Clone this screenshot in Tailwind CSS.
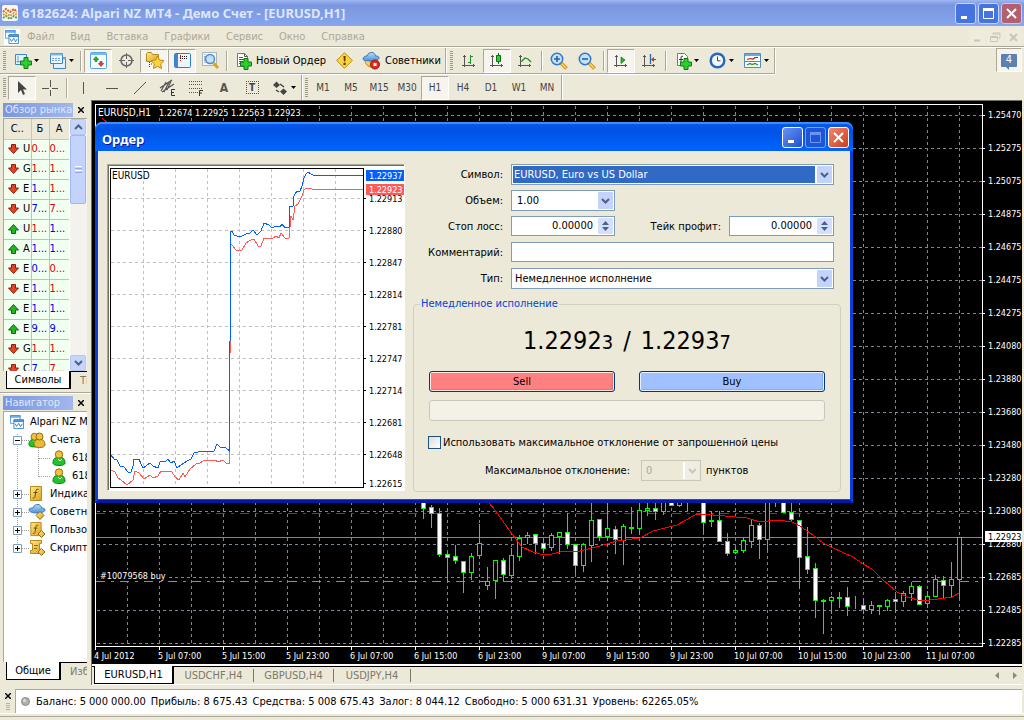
<!DOCTYPE html>
<html lang="ru">
<head>
<meta charset="utf-8">
<title>6182624: Alpari NZ MT4 - Демо Счет - [EURUSD,H1]</title>
<script src="https://cdn.jsdelivr.net/npm/@tailwindcss/browser@4"></script>
</head>
<body class="flex h-screen flex-col overflow-hidden bg-[#ece9d8] font-['DejaVu_Sans_Condensed','Noto_Sans',sans-serif] text-[11px] leading-[14px] text-black select-none">

<!-- shared icons -->
<svg width="0" height="0" class="absolute" aria-hidden="true">
  <defs>
    <linearGradient id="gBlue" x1="0" y1="0" x2="0" y2="1"><stop offset="0" stop-color="#b9dcfb"/><stop offset="1" stop-color="#4a90dc"/></linearGradient>
    <linearGradient id="gGold" x1="0" y1="0" x2="1" y2="1"><stop offset="0" stop-color="#ffe98a"/><stop offset="1" stop-color="#dca21c"/></linearGradient>
    <symbol id="plus" viewBox="0 0 12 12"><path d="M4 .5h4V4h3.500v4H8v3.500H4V8H.5V4H4z" fill="#2fce2f" stroke="#0b7d12"/></symbol>
    <symbol id="down" viewBox="0 0 11 10"><path d="M3.500.5h4V4h3L5.500 9.500.5 4h3z" fill="#e0452a" stroke="#8e1d0c"/></symbol>
    <symbol id="up" viewBox="0 0 11 10"><path d="M3.500 9.500h4V6h3L5.500.5.5 6h3z" fill="#25b325" stroke="#0d6b12"/></symbol>
    <symbol id="person" viewBox="0 0 14 16"><path d="M1 13c0-4 2-5.500 4-5.500h4c2 0 4 1.500 4 5.500 0 1.500-2 2.500-6 2.500S1 14.500 1 13z" fill="#1fc62a" stroke="#0e7a17"/><circle cx="7" cy="4.500" r="3.700" fill="#f0c244" stroke="#946b10"/><path d="M6 9l2 2 2-2" fill="none" stroke="#fff"/></symbol>
    <symbol id="axes" viewBox="0 0 16 16"><path d="M3.500 2v12M1 12.500h13M2 3.500h3M12.500 11v3" stroke="#555" fill="none"/></symbol>
    <symbol id="caret" viewBox="0 0 5 3"><path d="M0 0h5L2.500 3z" fill="#000"/></symbol>
    <symbol id="chev" viewBox="0 0 9 6"><path d="M1 1l3.500 3.500L8 1" fill="none" stroke="#4d6185" stroke-width="2"/></symbol>
    <symbol id="app" viewBox="0 0 16 16"><path d="M.5.5h11v9H.5z" fill="#fff" stroke="#4a94d8"/><path d="M.5.5h11v2H.5z" fill="#7ab8ee" stroke="#4a94d8"/><path d="M4.500 5.500h11v10h-11z" fill="#fff" stroke="#2f7fc9"/><path d="M4.500 5.500h11v2h-11z" fill="#58a5e6" stroke="#2f7fc9"/><path d="M6 10l1.500 3L10 9.500l2 4L14 10" fill="none" stroke="#2f6fc0"/></symbol>
    <symbol id="script" viewBox="0 0 16 16"><path d="M2.500.5h11v14h-11z" fill="url(#gGold)" stroke="#b88a1c"/><path d="M10.500 3.500c-2-1-2.500.5-2.700 2L7 10.500c-.3 1.500-1 2-2.500 1.500M5.500 6.500h4" fill="none" stroke="#6b4a00"/></symbol>
    <symbol id="hat" viewBox="0 0 18 16"><path d="M3 8c0 4 3 7 6 7 3.500 0 6-3 6-7z" fill="url(#gGold)" stroke="#b88a1c"/><path d="M1 7c0-2 2-3 4-3C6 1 8 .5 10 .5S13 2 13.500 4C16 4 17 4.500 17 6c0 2-4 3-8 3S1 8.500 1 7z" fill="url(#gBlue)" stroke="#3a76b8"/></symbol>
  </defs>
</svg>

<!-- title bar -->
<header class="flex h-[26px] shrink-0 items-center bg-linear-to-b from-[#9db6f3] from-0% via-[#7a96df] via-20% to-[#86a6ee] pr-[2px] pl-[2px]">
  <svg class="size-4 shrink-0" viewBox="0 0 16 16"><rect width="16" height="16" rx="2" fill="#fbf6ee"/><path d="M1 7l3-3 4 3 4-3 3 3" fill="none" stroke="#d9572b" stroke-width="2" stroke-dasharray="2 1"/><path d="M1 10l3-2 4 3 4-3 3 2" fill="none" stroke="#c8a43a" stroke-width="2" stroke-dasharray="2 1"/><path d="M1 13l3-2 4 3 4-3 3 2" fill="none" stroke="#58a04a" stroke-width="2" stroke-dasharray="2 1"/></svg>
  <h1 class="ml-1 flex-1 truncate font-['Noto_Sans',sans-serif] text-[13px] leading-[18px] font-bold text-[#dce6fc]">6182624: Alpari NZ MT4 - Демо Счет - [EURUSD,H1]</h1>
  <div class="flex gap-[2px]">
    <button aria-label="Свернуть" class="flex size-[21px] items-center justify-center rounded-[3px] border border-[#c6d4f7] bg-[#4573e0]"><svg class="size-[13px]" viewBox="0 0 13 13"><path d="M2 9h6v3H2z" fill="#fff"/></svg></button>
    <button aria-label="Развернуть" class="flex size-[21px] items-center justify-center rounded-[3px] border border-[#c6d4f7] bg-[#4573e0]"><svg class="size-[13px]" viewBox="0 0 13 13"><path d="M1.500 2.500h10v9h-10z" fill="none" stroke="#fff"/><path d="M1 1h11v3H1z" fill="#fff"/></svg></button>
    <button aria-label="Закрыть" class="flex size-[21px] items-center justify-center rounded-[3px] border border-[#d6c4dc] bg-[#b0606e]"><svg class="size-[13px]" viewBox="0 0 13 13"><path d="M2 2l9 9M11 2l-9 9" stroke="#fff" stroke-width="2"/></svg></button>
  </div>
</header>

<!-- menu -->
<nav class="flex h-[22px] shrink-0 items-center border-b border-white pr-[3px] pl-1 text-[#aca899] shadow-[inset_0_-1px_0_#aca899]">
  <span class="mr-[7px] flex size-4 items-center justify-center bg-white"><svg class="size-[14px]"><use href="#app"/></svg></span>
  <div class="flex flex-1 gap-4">
    <a href="#">Файл</a><a href="#">Вид</a><a href="#">Вставка</a><a href="#">Графики</a><a href="#">Сервис</a><a href="#">Окно</a><a href="#">Справка</a>
  </div>
  <div class="flex gap-[2px] text-[#c9c6b6]">
    <button aria-label="Свернуть окно" class="size-4 bg-[#efecde]"><svg class="size-4" viewBox="0 0 16 16"><path d="M5 11.500h6" stroke="currentColor" stroke-width="2"/></svg></button>
    <button aria-label="Восстановить окно" class="size-4 bg-[#efecde]"><svg class="size-4" viewBox="0 0 16 16"><path d="M6 6V4h7v5h-2M6 5h7M3.500 7.500h7v5h-7zM4 8.500h7" fill="none" stroke="currentColor"/></svg></button>
    <button aria-label="Закрыть окно" class="size-4 bg-[#efecde]"><svg class="size-4" viewBox="0 0 16 16"><path d="M5 5l7 7M12 5l-7 7" stroke="currentColor" stroke-width="2"/></svg></button>
  </div>
</nav>

<!-- main toolbar -->
<div class="flex h-[26px] shrink-0 items-start">
  <div role="toolbar" class="flex h-[26px] items-center border-r border-b border-[#aca899] shadow-[1px_1px_0_#fff]">
    <span class="w-2 pl-[3px]"><svg class="h-5 w-[3px]" viewBox="0 0 3 20"><path d="M1.500 0v20" stroke="#9d9a8b" stroke-width="3" stroke-dasharray="1 1"/></svg></span>
    <button aria-label="Новый график" class="flex h-6 w-9 items-center justify-center gap-[2px]"><svg class="size-[18px]" viewBox="0 0 18 18"><path d="M1.500 2.500h11v10h-11z" fill="#e4f1fc" stroke="#3d87c8"/><path d="M4 4v7M2.500 9.500h8" stroke="#6ba7dc"/><use href="#plus" x="6" y="5" width="12" height="12"/></svg><svg class="h-[3px] w-[5px]"><use href="#caret"/></svg></button>
    <button aria-label="Профили" class="flex h-6 w-[34px] items-center justify-center gap-[2px]"><svg class="size-[18px]" viewBox="0 0 18 18"><path d="M4.500 5.500h12v11h-12z" fill="#e4f1fc" stroke="#3d87c8"/><path d="M4.500 5.500h12v2h-12z" fill="#7ab8ee"/><path d="M1.500 1.500h12v10h-12z" fill="#eef6fd" stroke="#3d87c8"/><path d="M1.500 1.500h12v2h-12z" fill="#7ab8ee"/><path d="M3 6.500h9M3 8.500h9" stroke="#6ba7dc" stroke-dasharray="2 1"/></svg><svg class="h-[3px] w-[5px]"><use href="#caret"/></svg></button>
    <span class="mx-[2px] h-5 w-[2px] border-r border-white bg-[#aca899]"></span>
    <button aria-label="Обзор рынка" class="flex h-6 w-7 items-center justify-center border border-[#aca899] border-r-white border-b-white bg-[#f6f4ec]"><svg class="size-[17px]" viewBox="0 0 17 17"><rect x=".5" y=".5" width="16" height="16" rx="1" fill="#f4fafe" stroke="#58a5e6"/><path d="M1 1h15v2H1z" fill="#7ab8ee"/><use href="#up" x="3" y="4" width="6" height="6"/><use href="#down" x="8" y="9" width="6" height="6"/></svg></button>
    <button aria-label="Окно данных" class="flex h-6 w-7 items-center justify-center"><svg class="size-[17px]" viewBox="0 0 17 17"><circle cx="8.500" cy="8.500" r="5.500" fill="none" stroke="#666" stroke-width="1.500"/><path d="M8.500 1v6M8.500 10v6M1 8.500h6M10 8.500h6" stroke="#666"/></svg></button>
    <button aria-label="Навигатор" class="flex h-6 w-7 items-center justify-center border border-[#aca899] border-r-white border-b-white bg-[#f6f4ec]"><svg class="size-[19px]" viewBox="0 0 19 19"><path d="M1.500 2.500l1-1h4l1 2h6v7h-12z" fill="url(#gGold)" stroke="#b88a1c"/><path d="M4.500 11v6M6 13h2" stroke="#444" stroke-dasharray="1 1"/><path d="M12.500 5l2 4 4.500.7-3.300 3.200.8 4.600-4-2.100-4 2.100.8-4.600L6 9.700l4.500-.7z" fill="#fcd23a" stroke="#b88a1c"/></svg></button>
    <button aria-label="Терминал" class="flex h-6 w-7 items-center justify-center border border-[#aca899] border-r-white border-b-white bg-[#f6f4ec]"><svg class="size-[17px]" viewBox="0 0 17 17"><rect x=".5" y="1.500" width="16" height="14" rx="1" fill="#eaf4fd" stroke="#2f7fc9"/><path d="M1 2h3v13H1z" fill="#3f86cc"/><path d="M6.500 3v3M6.500 8v1" stroke="#e01010"/><path d="M6.500 6v1M8 4.500h6M8 6.500h6" stroke="#111" stroke-dasharray="1 1"/></svg></button>
    <button aria-label="Тестер стратегий" class="flex h-6 w-7 items-center justify-center"><svg class="size-[19px]" viewBox="0 0 19 19"><path d="M1.500 1.500h14v13h-14z" fill="#f4f6f8" stroke="#a9b4bf"/><path d="M3 6h10M3 9h3M4 3v10" stroke="#7f92a6" stroke-dasharray="1 1"/><circle cx="9" cy="8" r="4.500" fill="#bcdcf6" fill-opacity=".8" stroke="#4a8fd0" stroke-width="1.500"/><path d="M12.500 12l4.500 5" stroke="#d9a429" stroke-width="3"/></svg></button>
    <span class="mx-[2px] h-5 w-[2px] border-r border-white bg-[#aca899]"></span>
    <button class="flex h-6 w-[100px] items-center gap-1 pl-1 whitespace-nowrap"><svg class="size-[18px] shrink-0" viewBox="0 0 18 18"><path d="M3.500 1.500h7l3 3v10h-10z" fill="#fff" stroke="#777"/><path d="M10.500 1.500v3h3M5 5.500h4M5 7.500h6M5 9.500h4M5 11.500h3" fill="none" stroke="#555"/><use href="#plus" x="6" y="6" width="12" height="12"/></svg>Новый Ордер</button>
    <button aria-label="MetaEditor" class="flex h-6 w-7 items-center justify-center"><svg class="size-[17px]" viewBox="0 0 17 17"><path d="M8.500.7l7.800 7.800-7.800 7.800L.7 8.500z" fill="#fbd440" stroke="#b98b15"/><path d="M7.500 4h2.200l-.4 5.500H7.900zM7.500 10.700h2.200V13H7.500z" fill="#5a3b00"/></svg></button>
    <button class="flex h-6 w-[87px] items-center gap-[5px] pl-1 whitespace-nowrap"><svg class="size-[18px] shrink-0" viewBox="0 0 18 18"><use href="#hat" width="18" height="16"/><circle cx="13" cy="12.500" r="4.500" fill="#e02a1c" stroke="#a01208"/><path d="M11.500 11h3v3h-3z" fill="#fff"/></svg>Советники</button>
  </div>
  <div role="toolbar" class="flex h-[26px] items-center border-r border-b border-[#aca899] pl-px shadow-[1px_1px_0_#fff]">
    <span class="w-2 pl-[3px]"><svg class="h-5 w-[3px]" viewBox="0 0 3 20"><path d="M1.500 0v20" stroke="#9d9a8b" stroke-width="3" stroke-dasharray="1 1"/></svg></span>
    <button aria-label="Бары" class="flex h-6 w-7 items-center justify-center"><svg class="size-4" viewBox="0 0 16 16"><use href="#axes"/><path d="M9.500 2v9M9.500 3.500H12M7 9.500h2.500" stroke="#1d8f23" fill="none"/></svg></button>
    <button aria-label="Японские свечи" class="flex h-6 w-7 items-center justify-center border border-[#aca899] border-r-white border-b-white bg-[#f6f4ec]"><svg class="size-4" viewBox="0 0 16 16"><use href="#axes"/><path d="M9.500 0v11" stroke="#0d7016"/><path d="M7.500 2.500h4v6h-4z" fill="#2fce2f" stroke="#0d7016"/></svg></button>
    <button aria-label="Линия" class="flex h-6 w-7 items-center justify-center"><svg class="size-4" viewBox="0 0 16 16"><use href="#axes"/><path d="M3 9l2-1 3-3 3 1 3 3" stroke="#1d8f23" fill="none" stroke-width="1.300"/></svg></button>
    <span class="mx-[2px] h-5 w-[2px] border-r border-white bg-[#aca899]"></span>
    <button aria-label="Увеличить" class="flex h-6 w-7 items-center justify-center"><svg class="size-[18px]" viewBox="0 0 18 18"><path d="M11 11l5.500 5.500" stroke="#c9921d" stroke-width="3.500"/><path d="M11 11l5 5" stroke="#ffdc5e" stroke-width="1.500"/><circle cx="7" cy="7" r="5.700" fill="#c5e2fb" stroke="#2f78c8" stroke-width="1.500"/><path d="M4 7h6M7 4v6" stroke="#2a5fa8" stroke-width="1.600"/></svg></button>
    <button aria-label="Уменьшить" class="flex h-6 w-7 items-center justify-center"><svg class="size-[18px]" viewBox="0 0 18 18"><path d="M11 11l5.500 5.500" stroke="#c9921d" stroke-width="3.500"/><path d="M11 11l5 5" stroke="#ffdc5e" stroke-width="1.500"/><circle cx="7" cy="7" r="5.700" fill="#c5e2fb" stroke="#2f78c8" stroke-width="1.500"/><path d="M4 7h6" stroke="#2a5fa8" stroke-width="1.600"/></svg></button>
    <span class="mx-[2px] h-5 w-[2px] border-r border-white bg-[#aca899]"></span>
    <button aria-label="Автопрокрутка" class="flex h-6 w-7 items-center justify-center border border-[#aca899] border-r-white border-b-white bg-[#f6f4ec]"><svg class="size-4" viewBox="0 0 16 16"><use href="#axes"/><path d="M8 4l4 3-4 3.500z" fill="#23b52a" stroke="#0d7016" stroke-width=".7"/></svg></button>
    <button aria-label="Сдвиг графика" class="flex h-6 w-7 items-center justify-center"><svg class="size-4" viewBox="0 0 16 16"><use href="#axes"/><path d="M9.500 1v10" stroke="#2668b8" stroke-width="1.300"/><path d="M10 6.500l3-2.500v2h2v1h-2v2z" fill="#c0331c"/></svg></button>
    <span class="mx-[2px] h-5 w-[2px] border-r border-white bg-[#aca899]"></span>
    <button aria-label="Индикаторы" class="flex h-6 w-[35px] items-center justify-center gap-[2px]"><svg class="size-[18px]" viewBox="0 0 18 18"><path d="M3.500 1.500h7l3 3v9h-10z" fill="#fff" stroke="#777"/><path d="M9 4.500c-1.500-1-2 0-2 1.500v6M5 7.500h4" fill="none" stroke="#333"/><use href="#plus" x="6" y="6" width="12" height="12"/></svg><svg class="h-[3px] w-[5px]"><use href="#caret"/></svg></button>
    <button aria-label="Периоды" class="flex h-6 w-[35px] items-center justify-center gap-[3px]"><svg class="size-[17px]" viewBox="0 0 17 17"><circle cx="8.500" cy="8.500" r="6.800" fill="#f4f7fa" stroke="#2468c0" stroke-width="2.500"/><path d="M8.500 4.500v4.300h3" fill="none" stroke="#444"/></svg><svg class="h-[3px] w-[5px]"><use href="#caret"/></svg></button>
    <button aria-label="Шаблоны" class="flex h-6 w-[35px] items-center justify-center gap-[3px]"><svg class="size-[17px]" viewBox="0 0 17 17"><path d="M.5 1.500h16v14H.5z" fill="#fff" stroke="#4f8cc4"/><path d="M1 2h15v2H1z" fill="#6aa8e2"/><path d="M1 9.500h15" stroke="#4f8cc4"/><path d="M3 7.500l3-1 3 .5 2-1.500h3" fill="none" stroke="#a82020" stroke-width="1.200"/><path d="M3 13l3-1.500 2 1 3-1 3 1.500" fill="none" stroke="#1d8f23" stroke-width="1.200"/></svg><svg class="h-[3px] w-[5px]"><use href="#caret"/></svg></button>
  </div>
  <div class="flex flex-1 justify-end pr-[2px]">
    <button aria-label="Сообщения: 4" class="flex h-6 w-[26px] items-center justify-center border border-[#aca899] border-r-white border-b-white bg-[#f6f4ec]"><span class="relative flex h-[13px] w-4 items-center justify-center rounded-[1px] bg-[#5b80b4] text-white">4<svg class="absolute top-[12px] left-1 h-1 w-2" viewBox="0 0 8 4"><path d="M0 0h4v4z" fill="#5b80b4"/></svg></span></button>
  </div>
</div>

<!-- drawing and timeframe toolbars -->
<div class="flex h-[26px] shrink-0 items-center pt-px text-[10px] text-[#444]">
  <div role="toolbar" class="flex h-[25px] items-center border-r border-[#aca899] shadow-[1px_0_0_#fff]">
    <span class="w-2 pl-[3px]"><svg class="h-5 w-[3px]" viewBox="0 0 3 20"><path d="M1.500 0v20" stroke="#9d9a8b" stroke-width="3" stroke-dasharray="1 1"/></svg></span>
    <button aria-label="Курсор" class="flex h-6 w-7 items-center justify-center border border-[#aca899] border-r-white border-b-white bg-[#f6f4ec]"><svg class="size-4" viewBox="0 0 16 16"><path d="M4 1v12l3-3 2 5 2-1-2-4.500h4z" fill="#444"/></svg></button>
    <button aria-label="Перекрестие" class="flex h-6 w-7 items-center justify-center"><svg class="size-4" viewBox="0 0 16 16"><path d="M8.500 0v7M8.500 10v6M0 8.500h7M10 8.500h6" stroke="#555"/></svg></button>
    <span class="mx-[2px] h-5 w-[2px] border-r border-white bg-[#aca899]"></span>
    <button aria-label="Вертикальная линия" class="flex h-6 w-7 items-center justify-center"><svg class="size-4" viewBox="0 0 16 16"><path d="M7.500 2v12" stroke="#555"/></svg></button>
    <button aria-label="Горизонтальная линия" class="flex h-6 w-7 items-center justify-center"><svg class="size-4" viewBox="0 0 16 16"><path d="M2 8.500h12" stroke="#555"/></svg></button>
    <button aria-label="Трендовая линия" class="flex h-6 w-7 items-center justify-center"><svg class="size-4" viewBox="0 0 16 16"><path d="M2 14L14 2" stroke="#555"/></svg></button>
    <button aria-label="Равноудаленный канал" class="flex h-6 w-7 items-center justify-center"><svg class="size-[18px]" viewBox="0 0 18 18"><path d="M1 9L13 1M3 13L15 5M2 12l5-9M5 13l5-10M8 11l4-9" stroke="#555" stroke-width="1.200"/><path d="M16 10.500h-3.500v6H16M12.500 13.500H15" fill="none" stroke="#333"/></svg></button>
    <button aria-label="Линии Фибоначчи" class="flex h-6 w-7 items-center justify-center"><svg class="size-[18px]" viewBox="0 0 18 18"><path d="M2 2.500h14M2 5.500h14M2 9.500h14M2 13.500h9" stroke="#555" stroke-dasharray="1 1"/><path d="M16 11.500h-3.500V17M12.500 14H15" fill="none" stroke="#333"/></svg></button>
    <button aria-label="Текст" class="flex h-6 w-7 items-center justify-center text-[12px] font-bold text-[#555]">A</button>
    <button aria-label="Текстовая метка" class="flex h-6 w-7 items-center justify-center"><span class="flex size-[13px] items-center justify-center border border-dotted border-[#555] font-bold">T</span></button>
    <button aria-label="Стрелки" class="flex h-6 w-[35px] items-center justify-center gap-[3px]"><svg class="size-4" viewBox="0 0 16 16"><path d="M1 5l3.500-3.500L8 5 4.500 8zM8 11.500l3.500-3 3.500 3-3.500 3.500z" fill="#444"/><path d="M4 10l3 2M8 4l4 3" stroke="#444" stroke-width="1.500"/></svg><svg class="h-[3px] w-[5px]"><use href="#caret"/></svg></button>
  </div>
  <div role="toolbar" class="flex h-[25px] items-center border-r border-[#aca899] shadow-[1px_0_0_#fff]">
    <span class="w-[7px] pl-[3px]"><svg class="h-5 w-[3px]" viewBox="0 0 3 20"><path d="M1.500 0v20" stroke="#9d9a8b" stroke-width="3" stroke-dasharray="1 1"/></svg></span>
    <button class="h-6 w-7">M1</button><button class="h-6 w-7">M5</button><button class="h-6 w-7">M15</button><button class="h-6 w-7">M30</button><button class="h-6 w-7 border border-[#aca899] border-r-white border-b-white bg-[#f6f4ec]">H1</button><button class="h-6 w-7">H4</button><button class="h-6 w-7">D1</button><button class="h-6 w-7">W1</button><button class="h-6 w-7">MN</button>
  </div>
</div>

<main class="flex min-h-0 flex-1">
  <!-- docked panels -->
  <aside class="flex w-[91px] shrink-0 flex-col overflow-hidden pt-[2px]">
    <section class="flex h-[292px] shrink-0 flex-col border-b border-white pr-1 pl-[3px] shadow-[inset_0_-1px_0_#aca899]">
      <div class="flex h-4 shrink-0 items-center">
        <h2 class="h-[14px] w-[70px] overflow-hidden bg-linear-to-r from-[#7a96df] to-[#a3b8ea] pl-[2px] leading-[13px] whitespace-nowrap text-[#dce6fc]">Обзор рынка</h2>
        <button aria-label="Закрыть обзор рынка" class="ml-[5px]"><svg class="size-[6px]" viewBox="0 0 6 6"><path d="M0 0l6 6M6 0L0 6" stroke="#000" stroke-width="1.500"/></svg></button>
      </div>
      <div class="flex h-[253px] shrink-0 overflow-hidden border-t border-l border-[#aca899] bg-white">
        <table class="w-[65px] shrink-0 table-fixed self-start border-collapse">
          <colgroup><col class="w-[27px]"><col class="w-[18px]"><col class="w-5"></colgroup>
          <thead><tr class="h-5 bg-[#ece9d8]"><th class="border-r border-b border-[#cbc7b8] p-0 font-normal">С..</th><th class="border-r border-b border-[#cbc7b8] p-0 font-normal">Б</th><th class="border-b border-[#cbc7b8] p-0 font-normal">А</th></tr></thead>
          <tbody id="quotes"></tbody>
        </table>
        <div class="ml-px flex flex-1 flex-col bg-[#f3f2ec] pr-px">
          <button aria-label="Вверх" class="flex h-4 items-center justify-center rounded-[2px] border border-[#b4c6f4] bg-[#c6d5fc]"><svg class="h-[6px] w-[9px] rotate-180"><use href="#chev"/></svg></button>
          <div class="flex h-[69px] flex-col items-center justify-center gap-px rounded-[2px] border border-[#a0b6ee] bg-[#c3d3fb]"><i class="h-px w-[7px] bg-white"></i><i class="h-px w-[7px] bg-[#8ea8e8]"></i><i class="h-px w-[7px] bg-white"></i><i class="h-px w-[7px] bg-[#8ea8e8]"></i></div>
          <button aria-label="Вниз" class="mt-auto flex h-4 items-center justify-center rounded-[2px] border border-[#b4c6f4] bg-[#c6d5fc]"><svg class="h-[6px] w-[9px]"><use href="#chev"/></svg></button>
        </div>
      </div>
      <div class="flex h-[18px] shrink-0 overflow-hidden pl-[3px]">
        <button class="w-[65px] shrink-0 border border-t-0 border-r-2 border-black bg-white">Символы</button>
        <button class="flex-1 overflow-hidden border-t border-black pl-[9px] text-left whitespace-nowrap text-[#7b7869]">Тиковый</button>
      </div>
    </section>
    <section class="flex min-h-0 flex-1 flex-col pr-1 pb-[5px] pl-[3px]">
      <div class="flex h-[17px] shrink-0 items-center pt-px">
        <h2 class="h-[14px] w-[70px] overflow-hidden bg-linear-to-r from-[#7a96df] to-[#a3b8ea] pl-[2px] leading-[13px] whitespace-nowrap text-[#dce6fc]">Навигатор</h2>
        <button aria-label="Закрыть навигатор" class="ml-[5px]"><svg class="size-[6px]" viewBox="0 0 6 6"><path d="M0 0l6 6M6 0L0 6" stroke="#000" stroke-width="1.500"/></svg></button>
      </div>
      <ul class="relative min-h-0 flex-1 overflow-hidden border-t border-l border-[#aca899] bg-white pt-px whitespace-nowrap">
        <svg class="absolute top-[22px] left-[13px] h-[120px] w-[60px]" viewBox="0 0 60 120"><path d="M.5 0v114M1 114.500h12M1 96.500h12M1 78.500h12M1 60.500h12M1 6.500h12M21.500 14v29M22 24.500h12M22 42.500h12" fill="none" stroke="#9d9d9d" stroke-dasharray="1 1"/></svg>
        <li class="flex h-[18px] items-center gap-[6px] pl-[6px]"><svg class="size-[14px] shrink-0"><use href="#app"/></svg>Alpari NZ MT4</li>
        <li class="relative flex h-[18px] items-center gap-[4px] pl-[9px]"><svg class="mr-[2px] size-[9px] shrink-0" viewBox="0 0 9 9"><path d="M.5.5h8v8h-8z" fill="#fff" stroke="#7b9ebd"/><path d="M2 4.500h5" stroke="#000"/></svg><svg class="h-[17px] w-[18px] shrink-0" viewBox="0 0 18 17"><use href="#person" x="0" y="0" width="13" height="16"/><path d="M6 13c0-4 2-5.500 4-5.500h3c2 0 4 1.500 4 5.500 0 1.500-2 2.500-5.500 2.500S6 14.500 6 13z" fill="#edb93a" stroke="#946b10"/><circle cx="11.500" cy="4.500" r="3.500" fill="#f0c244" stroke="#946b10"/></svg>Счета</li>
        <li class="relative flex h-[18px] items-center gap-[6px] pl-12"><svg class="h-4 w-[14px] shrink-0"><use href="#person"/></svg>6182624</li>
        <li class="relative flex h-[18px] items-center gap-[6px] pl-12"><svg class="h-4 w-[14px] shrink-0"><use href="#person"/></svg>6182625</li>
        <li class="relative flex h-[18px] items-center gap-[4px] pl-[9px]"><svg class="mr-[2px] size-[9px] shrink-0" viewBox="0 0 9 9"><path d="M.5.5h8v8h-8z" fill="#fff" stroke="#7b9ebd"/><path d="M2 4.500h5M4.500 2v5" stroke="#000"/></svg><svg class="h-4 w-[18px] shrink-0" viewBox="0 0 18 16"><use href="#script" width="16" height="16"/></svg>Индикаторы</li>
        <li class="relative flex h-[18px] items-center gap-[4px] pl-[9px]"><svg class="mr-[2px] size-[9px] shrink-0" viewBox="0 0 9 9"><path d="M.5.5h8v8h-8z" fill="#fff" stroke="#7b9ebd"/><path d="M2 4.500h5M4.500 2v5" stroke="#000"/></svg><svg class="h-4 w-[18px] shrink-0" viewBox="0 0 18 16"><path d="M1 6c0-2 2-2 4-2 1-3 3-3.500 5-3.500s3 1.500 3.500 3.500c2 0 3.500.5 3.500 2 0 2-4 3-8 3S1 8 1 6z" fill="url(#gBlue)" stroke="#3a76b8"/><path d="M12 7.500l4 4-4 4-4-4z" fill="url(#gGold)" stroke="#946b10"/></svg>Советники</li>
        <li class="relative flex h-[18px] items-center gap-[4px] pl-[9px]"><svg class="mr-[2px] size-[9px] shrink-0" viewBox="0 0 9 9"><path d="M.5.5h8v8h-8z" fill="#fff" stroke="#7b9ebd"/><path d="M2 4.500h5M4.500 2v5" stroke="#000"/></svg><svg class="h-4 w-[18px] shrink-0" viewBox="0 0 18 16"><use href="#script" width="16" height="15"/><path d="M13.500 8.500l3.500 3.500-3.500 3.500L10 12z" fill="url(#gGold)" stroke="#946b10"/></svg>Пользовательские</li>
        <li class="relative flex h-[18px] items-center gap-[4px] pl-[9px]"><svg class="mr-[2px] size-[9px] shrink-0" viewBox="0 0 9 9"><path d="M.5.5h8v8h-8z" fill="#fff" stroke="#7b9ebd"/><path d="M2 4.500h5M4.500 2v5" stroke="#000"/></svg><svg class="h-4 w-[18px] shrink-0" viewBox="0 0 18 16"><path d="M2.500.5h11v3h-2v7h2v3h-11v-3h2v-7h-2z" fill="url(#gGold)" stroke="#b88a1c"/><path d="M6 5.500h4M6 8.500h3" stroke="#946b10"/><path d="M13.500 8.500l3.500 3.500-3.500 3.500L10 12z" fill="url(#gGold)" stroke="#946b10"/></svg>Скрипты</li>
      </ul>
      <div class="flex h-[18px] shrink-0 overflow-hidden pl-[3px]">
        <button class="w-[55px] shrink-0 border border-t-0 border-r-2 border-black bg-white">Общие</button>
        <button class="flex-1 overflow-hidden border-t border-black pl-[9px] text-left whitespace-nowrap text-[#7b7869]">Избранное</button>
      </div>
    </section>
  </aside>

  <!-- chart window -->
  <section class="relative flex min-w-0 flex-1 flex-col border-l border-[#716f64] pr-[2px]">
    <div class="min-h-0 flex-1 border-t border-[#716f64] bg-black">
      <svg class="block size-full" viewBox="92 101 930 563" role="img" aria-label="График EURUSD,H1" shape-rendering="crispEdges">
        <g id="grid" stroke="#778899" stroke-dasharray="3 3"></g>
        <path d="M96 513.500h887" stroke="#ff0000" stroke-dasharray="9 6 3 6"/>
        <path d="M96 581.500h887" stroke="#32cd32" stroke-dasharray="9 6 3 6"/>
        <path d="M96 537.500h887" stroke="#778899"/>
        <path d="M95.500 646.500v-542h887v542z" fill="none" stroke="#fff"/>
        <path d="M96 112l3 4 8 6" stroke="#f00" fill="none"/>
        <g id="candles" stroke="#00ff00"></g>
        <polyline fill="none" stroke="#f00" points="489,503 495,510 512,534 522,547 533,552 544,555 552,554 560,552 580,551 600,546 617,541 640,538 653,531 677,525 695,515 700,514 725,516 747,518 760,522 777,520 792,522 800,526 813,535 823,543 833,548 853,557 863,564 872,569 882,579 897,592 907,597 922,601 938,599 952,597 959,593"/>
        <g id="axis" fill="#fff" font-size="9" font-family="'DejaVu Sans Condensed',sans-serif"></g>
        <g fill="#fff" font-size="9" font-family="'DejaVu Sans Condensed',sans-serif">
          <path d="M96 107h204v11H96zM98 570h70v11H98z" fill="#000"/>
          <text x="98" y="116" font-size="10">EURUSD,H1</text><text x="159" y="116">1.22674 1.22925 1.22563 1.22923</text>
          <text x="100" y="579">#10079568 buy</text>
          <path d="M985 531h37v11h-37z"/><text x="988" y="540" fill="#000">1.22923</text>
        </g>
      </svg>
    </div>

    <!-- chart tabs -->
    <div class="flex h-[21px] shrink-0 border-b border-white pt-[2px] text-[#7b7869] shadow-[inset_0_2px_0_#fff]">
      <span class="w-[2px] border-t border-black"></span>
      <button class="w-[80px] border border-t-0 border-r-2 border-black bg-white text-black">EURUSD,H1</button>
      <div class="flex flex-1 items-center border-t border-black">
        <button class="h-[13px] w-20 border-r border-[#7b7869] leading-[13px]">USDCHF,H4</button>
        <button class="h-[13px] w-20 border-r border-[#7b7869] leading-[13px]">GBPUSD,H4</button>
        <button class="h-[13px] w-[77px] border-r border-[#7b7869] leading-[13px]">USDJPY,H4</button>
        <span class="ml-auto flex gap-[14px] pr-[5px]"><button aria-label="Назад"><svg class="h-[7px] w-1" viewBox="0 0 4 7"><path d="M4 0v7L0 3.500z" fill="#8d8a7b"/></svg></button><button aria-label="Вперед"><svg class="h-[7px] w-1" viewBox="0 0 4 7"><path d="M0 0v7l4-3.500z" fill="#8d8a7b"/></svg></button></span>
      </div>
    </div>

    <!-- order dialog floating over the chart -->
    <div role="dialog" aria-labelledby="dlgTitle" class="absolute top-[22px] left-[3px] flex w-[758px] flex-col rounded-t-[7px] border-x-[3px] border-b-[3px] border-[#0a40d8] border-b-[#0019a8] bg-[#ece9d8] shadow-[inset_0_-1px_0_#0855dd]">
      <div class="-mx-[3px] flex h-[29px] items-center rounded-t-[7px] bg-linear-to-b from-[#0a5cf0] from-0% via-[#0053e4] via-30% to-[#0062fb] to-90% pr-1 pl-[7px] shadow-[inset_0_2px_0_#3c8cff]">
        <h2 id="dlgTitle" class="flex-1 pt-1 font-['Noto_Sans',sans-serif] text-[13px] leading-[18px] font-bold text-white [text-shadow:1px_1px_#0f1089]">Ордер</h2>
        <div class="flex gap-[2px] pt-[2px]">
          <button aria-label="Свернуть" class="flex size-[21px] items-center justify-center rounded-[3px] border border-white bg-linear-to-br from-[#6a92f0] to-[#1c4fd0]"><svg class="size-[13px]" viewBox="0 0 13 13"><path d="M2 9h6v3H2z" fill="#fff"/></svg></button>
          <button aria-label="Развернуть" disabled class="flex size-[21px] items-center justify-center rounded-[3px] border border-[#7fa4ee] bg-[#1a55dc]"><svg class="size-[13px]" viewBox="0 0 13 13"><path d="M1.500 2.500h10v9h-10z" fill="none" stroke="#6f95ea"/><path d="M1 1h11v3H1z" fill="#6f95ea"/></svg></button>
          <button aria-label="Закрыть" class="flex size-[21px] items-center justify-center rounded-[3px] border border-white bg-linear-to-br from-[#f0876a] to-[#cf3a12]"><svg class="size-[13px]" viewBox="0 0 13 13"><path d="M2 2l9 9M11 2l-9 9" stroke="#fff" stroke-width="2"/></svg></button>
        </div>
      </div>
      <div class="flex gap-2 pt-[13px] pr-[9px] pb-2 pl-[9px]">
        <div class="h-[327px] w-[298px] shrink-0 border border-[#aca899] border-r-white border-b-white bg-white shadow-[inset_1px_1px_0_#716f64]">
          <svg class="block size-full" viewBox="108 165 296 325" shape-rendering="crispEdges" role="img" aria-label="Тиковый график EURUSD">
            <g id="miniGrid" stroke="#c0c0c0" stroke-dasharray="3 3"></g>
            <path d="M110.500 168.500h253v319h-253z" fill="none" stroke="#000"/>
            <polyline fill="none" stroke="#ff5a5a" points="111,470 115,472 118,478 121,480 127,485 133,480 135,471 139,473 144,479 150,475 153,478 158,476 161,471 172,472 175,477 179,480 183,473 185,477 190,469 196,464 200,463 205,460 215,460 218,462 223,460 227,464 229.500,463 229.500,451"/>
            <polyline fill="none" stroke="#ff5a5a" points="230.500,244 233,246 236,250 242,250 246,243 251,240 254,239 258,246 261,246 264,238 272,239 276,236 279,238 281,233 285,238 289,238 291,216 293,220 295,206 298,204 302,196 304,190 306,188 311,188 313,190 315,189.500 363,189.500"/>
            <polyline fill="none" stroke="#0060ff" points="111,455 114,459 117,460 120,466 124,467 128,472 131,472 133,466 134,459 139,459 141,464 143,468 146,466 150,463 153,466 158,468 160,462 166,461 168,459 171,463 174,461 177,468 181,465 187,461 191,459 194,453 202,451 214,451 217,444 220,447 226,448 229.500,451 229.500,341 230.500,341 230.500,231 232,231 234,235 240,237 246,234 250,233 253,230 257,235 261,231 264,223 269,225 272,228 276,226 280,227 282,224 285,228 289,227 290,206 293,206 294,196 297,191 300,191 302,186 304,178 306,174 308,172 311,174 314,175.500 363,175.500"/>
            <path d="M230.500 341v12" stroke="#ff5a5a"/>
            <g id="miniAxis" font-size="9" font-family="'DejaVu Sans Condensed',sans-serif"></g>
            <g font-size="9" font-family="'DejaVu Sans Condensed',sans-serif" fill="#fff">
              <text x="112" y="179" fill="#000" font-size="10">EURUSD</text>
              <path d="M366 170h38v11h-38z" fill="#0060ff"/><text x="369" y="179">1.22937</text>
              <path d="M366 184h38v11h-38z" fill="#ff5a5a"/><text x="369" y="193">1.22923</text>
            </g>
          </svg>
        </div>

        <form class="min-w-0 flex-1" onsubmit="return false">
          <div class="grid auto-rows-[26px] grid-cols-[90px_104px_1fr_105px] items-start gap-x-2 pr-[7px]">
            <label for="sym" class="pt-1 text-right">Символ:</label>
            <div class="relative col-span-3 flex h-[21px] border border-[#7f9db9] bg-white p-px">
              <select id="sym" class="h-full flex-1 appearance-none bg-[#316ac5] pl-px text-white outline-none"><option>EURUSD, Euro vs US Dollar</option></select>
              <span class="pointer-events-none ml-[2px] flex w-[15px] items-center justify-center rounded-[1px] bg-[#c3d3fb]"><svg class="h-[6px] w-[9px]"><use href="#chev"/></svg></span>
            </div>

            <label for="vol" class="pt-1 text-right">Объем:</label>
            <div class="flex h-[21px] border border-[#7f9db9] bg-white p-px">
              <select id="vol" class="h-full flex-1 appearance-none pl-1 outline-none"><option>1.00</option></select>
              <span class="pointer-events-none flex w-[15px] items-center justify-center rounded-[1px] bg-[#c3d3fb]"><svg class="h-[6px] w-[9px]"><use href="#chev"/></svg></span>
            </div>
            <span class="col-span-2"></span>

            <label for="sl" class="pt-1 text-right">Стоп лосс:</label>
            <div class="flex h-5 border border-[#7f9db9] bg-white p-px">
              <input id="sl" value="0.00000" class="w-0 flex-1 pr-[5px] text-right outline-none">
              <span class="flex w-[15px] flex-col justify-evenly rounded-[1px] bg-[#d3dffc]"><button type="button" aria-label="Больше" class="flex justify-center"><svg class="h-1 w-[7px]" viewBox="0 0 7 4"><path d="M0 4h7L3.500 0z" fill="#4d6185"/></svg></button><button type="button" aria-label="Меньше" class="flex justify-center"><svg class="h-1 w-[7px]" viewBox="0 0 7 4"><path d="M0 0h7L3.500 4z" fill="#4d6185"/></svg></button></span>
            </div>
            <label for="tp" class="pt-1 text-right whitespace-nowrap">Тейк профит:</label>
            <div class="flex h-5 border border-[#7f9db9] bg-white p-px">
              <input id="tp" value="0.00000" class="w-0 flex-1 pr-[5px] text-right outline-none">
              <span class="flex w-[15px] flex-col justify-evenly rounded-[1px] bg-[#d3dffc]"><button type="button" aria-label="Больше" class="flex justify-center"><svg class="h-1 w-[7px]" viewBox="0 0 7 4"><path d="M0 4h7L3.500 0z" fill="#4d6185"/></svg></button><button type="button" aria-label="Меньше" class="flex justify-center"><svg class="h-1 w-[7px]" viewBox="0 0 7 4"><path d="M0 0h7L3.500 4z" fill="#4d6185"/></svg></button></span>
            </div>

            <label for="com" class="pt-1 text-right">Комментарий:</label>
            <input id="com" class="col-span-3 h-5 border border-[#7f9db9] bg-white px-1 outline-none">

            <label for="typ" class="pt-1 text-right">Тип:</label>
            <div class="col-span-3 flex h-[21px] border border-[#7f9db9] bg-white p-px">
              <select id="typ" class="h-full flex-1 appearance-none pl-[2px] outline-none"><option>Немедленное исполнение</option></select>
              <span class="pointer-events-none flex w-[15px] items-center justify-center rounded-[1px] bg-[#c3d3fb]"><svg class="h-[6px] w-[9px]"><use href="#chev"/></svg></span>
            </div>
          </div>

          <fieldset class="mt-[3px] rounded-[4px] border border-[#d0d0bf] px-[15px] pb-[10px]">
            <legend class="-ml-[9px] px-px text-[#0046d5]">Немедленное исполнение</legend>
            <p class="flex h-[60px] items-center justify-center pt-px text-[25px] leading-[30px]"><span>1.2292<span class="text-[20px]">3</span><span class="mx-[10px]">/</span>1.2293<span class="text-[20px]">7</span></span></p>
            <div class="flex gap-6">
              <button type="button" class="h-[21px] flex-1 rounded-[3px] border border-[#003c74] bg-[#ff8080] leading-[17px] shadow-[inset_0_0_0_1px_#ffe8e4,inset_-2px_-2px_0_#e87070]">Sell</button>
              <button type="button" class="h-[21px] flex-1 rounded-[3px] border border-[#003c74] bg-[#a0c0ff] leading-[17px] shadow-[inset_0_0_0_1px_#e8f0ff,inset_-2px_-2px_0_#8caaf0]">Buy</button>
            </div>
            <button type="button" disabled aria-label="Статус" class="mt-2 block h-[21px] w-full rounded-[3px] border border-[#c9c7ba] bg-[#f4f2e8]"></button>
            <div class="mt-[14px] -ml-px flex items-center gap-[2px] whitespace-nowrap">
              <input id="dev" type="checkbox" class="size-[13px] shrink-0 appearance-none border border-[#1c5180] bg-linear-to-br from-[#dcdcd7] to-white">
              <label for="dev" class="pt-px">Использовать максимальное отклонение от запрошенной цены</label>
            </div>
            <div class="mt-[10px] flex h-[21px] items-center pl-[56px] whitespace-nowrap">
              <label for="max" class="w-[145px] text-right">Максимальное отклонение:</label>
              <span class="mr-[5px] ml-[11px] flex h-[21px] w-[60px] border border-[#c9c7ba] p-px">
                <select id="max" disabled class="h-full flex-1 appearance-none bg-[#ece9d8] pl-[3px] text-[#aca899] opacity-100"><option>0</option></select>
                <span class="flex w-[16px] items-center justify-center border-l-2 border-white bg-[#f0eee2]"><svg class="h-[6px] w-[9px]" viewBox="0 0 9 6"><path d="M1 1l3.500 3.500L8 1" fill="none" stroke="#c9c7ba" stroke-width="2"/></svg></span>
              </span>
              <span>пунктов</span>
            </div>
          </fieldset>
        </form>
      </div>
    </div>
  </section>
</main>

<!-- account status -->
<footer class="flex h-[35px] shrink-0 flex-col pt-1">
  <div class="flex h-[25px] border-b border-white pr-[2px]">
    <div class="flex w-[15px] flex-col items-center gap-1 pt-1"><button aria-label="Закрыть терминал"><svg class="size-[6px]" viewBox="0 0 6 6"><path d="M0 0l6 6M6 0L0 6" stroke="#000" stroke-width="1.500"/></svg></button><svg class="h-[8px] w-1" viewBox="0 0 4 8"><path d="M0 .5h4M0 2.500h4M0 4.500h4M0 6.500h4" stroke="#b5b2a2"/></svg></div>
    <p class="flex flex-1 items-center gap-[5px] border-t border-l border-[#aca899] bg-white pl-[5px]"><svg class="mr-px size-[9px]" viewBox="0 0 9 9"><circle cx="4.500" cy="4.500" r="4" fill="#b0b0aa" stroke="#8b8b85"/><circle cx="3.500" cy="3.500" r="1.500" fill="#dededa"/></svg><span>Баланс: 5 000 000.00</span><span>Прибыль: 8 675.43</span><span>Средства: 5 008 675.43</span><span>Залог: 8 044.12</span><span>Свободно: 5 000 631.31</span><span>Уровень: 62265.05%</span></p>
  </div>
  <div class="mt-[2px] border-t border-[#aca899]"></div>
</footer>

<script>
const quotes = [['down','U','0','r','0','r'],['down','G','1','r','1','r'],['down','E','1','b','1','r'],['down','U','7','b','7','r'],['up','U','1','r','1','b'],['up','A','1','b','1','b'],['down','E','0','b','0','r'],['down','E','1','b','1','r'],['up','E','1','b','1','b'],['up','E','9','b','9','b'],['down','G','1','r','1','r'],['down','C','7','b','7','r']];
const ink = { r: 'text-[#e00000]', b: 'text-[#0000e0]' };
document.getElementById('quotes').innerHTML = quotes.map(([d, s, bid, bc, ask, ac]) =>
  `<tr class="h-5 bg-[#f0fff0]"><td class="border-r border-b border-[#c0c0c0] p-0"><span class="flex items-center gap-1 pl-1"><svg class="h-[10px] w-[11px] shrink-0"><use href="#${d}"/></svg>${s}</span></td><td class="border-r border-b border-[#c0c0c0] p-0 ${ink[bc]}">${bid}...</td><td class="border-b border-[#c0c0c0] p-0 ${ink[ac]}">${ask}...</td></tr>`).join('');

const line = (x1, y1, x2, y2) => `<path d="M${x1} ${y1}L${x2} ${y2}"/>`;
const range = (a, b, step) => Array.from({ length: Math.floor((b - a) / step) + 1 }, (_, i) => a + i * step);

// main chart grid and scales
document.getElementById('grid').innerHTML =
  range(127, 981, 32).map(x => line(x + .5, 106, x + .5, 646)).join('') +
  range(115, 643, 33).map(y => line(97, y + .5, 982, y + .5)).join('');
const prices = ['1.25470','1.25275','1.25075','1.24875','1.24675','1.24475','1.24275','1.24080','1.23880','1.23680','1.23480','1.23280','1.23080','1.22880','1.22685','1.22485','1.22285'];
const times = ['4 Jul 2012','5 Jul 07:00','5 Jul 15:00','5 Jul 23:00','6 Jul 07:00','6 Jul 15:00','6 Jul 23:00','9 Jul 07:00','9 Jul 15:00','9 Jul 23:00','10 Jul 07:00','10 Jul 15:00','10 Jul 23:00','11 Jul 07:00'];
document.getElementById('axis').innerHTML =
  prices.map((p, i) => `<path d="M982 ${115.5 + i * 33}h3" stroke="#fff"/><text x="988" y="${118 + i * 33}">${p}</text>`).join('') +
  times.map((t, i) => `<path d="M${95.5 + i * 64} 646v4" stroke="#fff"/><text x="${94 + i * 64}" y="659">${t}</text>`).join('');

// x, high, low, body top, body bottom, filled
const candles = [[423,500,518,500,508,1],[431,505,527,507,513,1],[439,508,556,513,554,1],[447,552,581,554,557,1],[455,545,563,556,560,1],[463,561,592,561,572,1],[471,553,579,556,572,0],[479,524,558,543,555,0],[487,567,589,581,585,0],[495,560,598,560,580,0],[503,558,581,560,574,1],[511,548,578,555,575,0],[519,535,560,538,556,0],[527,532,543,535,537,0],[535,534,553,534,543,1],[543,538,550,543,548,1],[551,533,550,535,547,0],[559,532,553,532,536,0],[567,513,548,532,544,1],[575,544,573,544,565,1],[583,543,571,544,565,0],[591,500,561,520,545,0],[599,519,540,519,536,1],[607,500,540,528,536,0],[615,526,553,529,539,1],[623,524,564,526,540,0],[631,507,533,527,528,0],[639,500,533,510,528,0],[647,500,515,508,510,0],[655,503,519,508,511,1],[663,500,514,500,511,0],[671,500,505,500,505,1],[679,500,506,500,505,0],[687,500,510,500,500,0],[703,500,532,500,522,1],[711,511,526,520,521,0],[719,511,541,520,541,1],[727,533,555,541,553,1],[735,547,553,550,552,0],[743,537,552,540,550,0],[751,519,547,525,541,0],[759,523,558,525,539,1],[767,500,549,500,539,0],[775,500,506,500,500,0],[783,500,512,500,512,1],[791,502,521,512,519,1],[799,520,588,520,557,1],[807,527,573,556,569,1],[815,563,617,568,600,1],[823,599,633,600,601,0],[831,596,613,597,600,0],[839,592,607,597,598,0],[847,587,615,597,606,1],[855,596,608,606,606,0],[863,599,613,605,609,1],[871,601,613,605,609,0],[879,605,614,605,606,0],[887,599,610,600,606,0],[895,595,612,599,601,1],[903,591,606,593,601,0],[911,582,600,586,593,0],[919,585,604,586,604,1],[927,591,607,596,603,0],[935,575,596,579,596,0],[943,576,598,580,585,1],[951,562,597,579,585,0],[959,537,598,537,579,0]];
document.getElementById('candles').innerHTML = candles.map(([x, h, l, t, b, f]) =>
  line(x + .5, h, x + .5, l + 1) + `<rect x="${x - 1.5}" y="${t + .5}" width="4" height="${b - t}" fill="${f ? '#fff' : '#000'}"/>`).join('');

// tick chart inside the dialog
document.getElementById('miniGrid').innerHTML =
  range(143, 335, 32).map(x => line(x + .5, 169, x + .5, 487)).join('') +
  range(198, 454, 32).map(y => line(111, y + .5, 363, y + .5)).join('');
document.getElementById('miniAxis').innerHTML =
  ['1.22913','1.22880','1.22847','1.22814','1.22781','1.22747','1.22714','1.22681','1.22648','1.22615'].map((p, i) => {
    const y = i < 9 ? 198 + i * 32 : 483;
    return `<path d="M363 ${y + .5}h3" stroke="#000"/><text x="369" y="${y + 4}">${p}</text>`;
  }).join('');
</script>
</body>
</html>
